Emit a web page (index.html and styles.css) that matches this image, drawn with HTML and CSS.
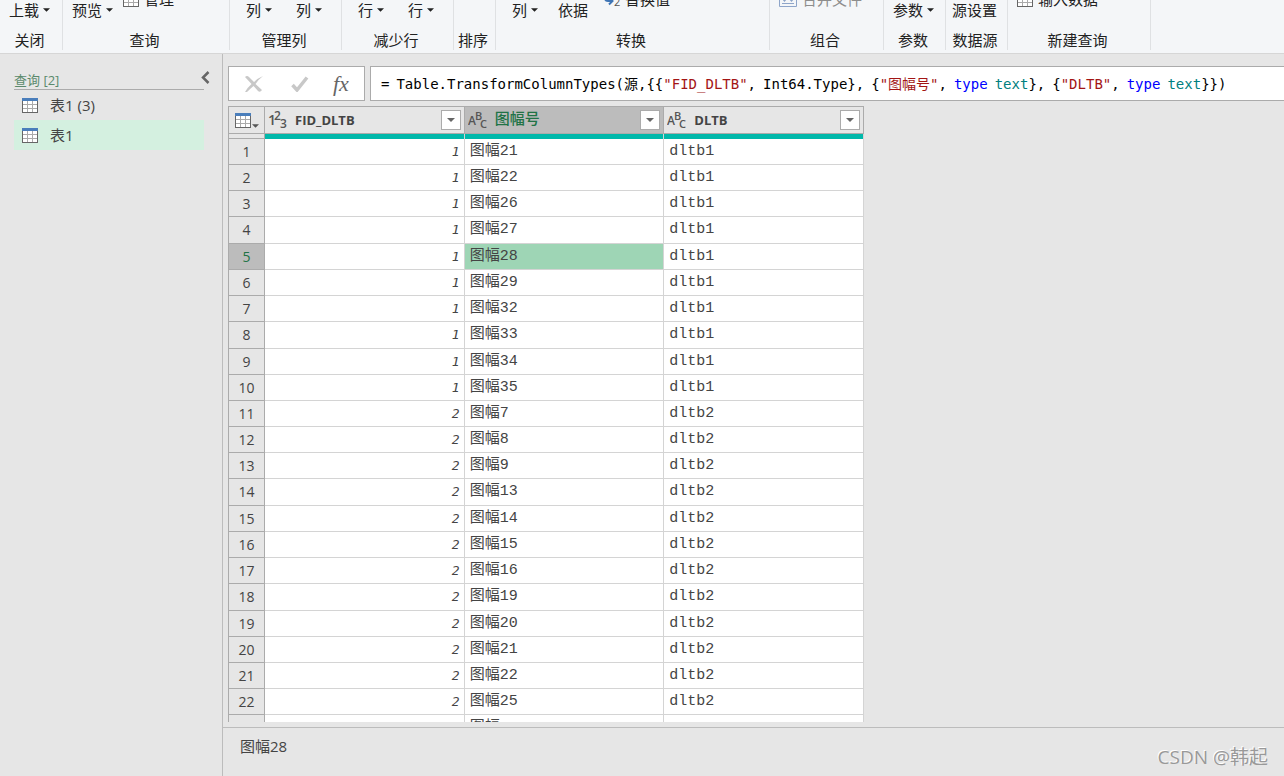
FILE: index.html
```html
<!DOCTYPE html>
<html lang="zh-CN">
<head>
<meta charset="utf-8">
<title>Power Query 编辑器</title>
<link rel="stylesheet" href="styles.css">
</head>
<body>
<svg class="defs" aria-hidden="true">
  <symbol id="i-grid" viewBox="0 0 16 15"><rect x=".5" y=".5" width="15" height="14" fill="#fff" stroke="#666"/><path d="M5.5 3v11M10.5 3v11M1 6.5h14M1 10.5h14" stroke="#aaa" fill="none"/><path d="M0 0h16v3H0z" fill="#4a7ebb"/></symbol>
  <symbol id="i-down" viewBox="0 0 8 4"><path d="M0 0h8L4 4z" fill="currentColor"/></symbol>
</svg>
<div class="app">
  <header class="ribbon">
    <section class="group g-close">
      <div class="commands"><button>上载<svg class="caret"><use href="#i-down"/></svg></button></div>
      <div class="label">关闭</div>
    </section>
    <section class="group g-query">
      <div class="commands"><button>预览<svg class="caret"><use href="#i-down"/></svg></button><button class="small"><svg class="grid-icon"><use href="#i-grid"/></svg>管理</button></div>
      <div class="label">查询</div>
    </section>
    <section class="group g-cols">
      <div class="commands spread"><button>列<svg class="caret"><use href="#i-down"/></svg></button><button>列<svg class="caret"><use href="#i-down"/></svg></button></div>
      <div class="label">管理列</div>
    </section>
    <section class="group g-cols">
      <div class="commands spread"><button>行<svg class="caret"><use href="#i-down"/></svg></button><button>行<svg class="caret"><use href="#i-down"/></svg></button></div>
      <div class="label">减少行</div>
    </section>
    <section class="group g-sort">
      <div class="commands"></div>
      <div class="label">排序</div>
    </section>
    <section class="group g-transform">
      <div class="commands"><button>列<svg class="caret"><use href="#i-down"/></svg></button><button>依据</button><button class="small"><svg class="replace-icon" viewBox="0 0 18 16"><path d="M1 5v2q0 3 3 3h4M5 6.500l3.500 3.500L5 13.500" fill="none" stroke="#3f75b5" stroke-width="2"/><text x="10" y="15" font-size="11" fill="#555">2</text></svg>替换值</button></div>
      <div class="label">转换</div>
    </section>
    <section class="group g-combine">
      <div class="commands"><button class="small" disabled><svg class="combine-icon" viewBox="0 0 18 16"><path d="M.5 0v15.500h17V0M3 12.500h12" fill="none" stroke="#8ea5c9"/><path d="M3 8h5l-2.500 3zM10 8h5l-2.500 3z" fill="#8ea5c9"/></svg>合并文件</button></div>
      <div class="label">组合</div>
    </section>
    <section class="group g-param">
      <div class="commands"><button>参数<svg class="caret"><use href="#i-down"/></svg></button></div>
      <div class="label">参数</div>
    </section>
    <section class="group g-source">
      <div class="commands"><button>源设置</button></div>
      <div class="label">数据源</div>
    </section>
    <section class="group g-new">
      <div class="commands"><button class="small"><svg class="grid-icon"><use href="#i-grid"/></svg>输入数据</button></div>
      <div class="label">新建查询</div>
    </section>
  </header>
  <div class="workspace">
    <nav class="sidebar">
      <div class="side-head"><span>查询 [2]</span><button aria-label="折叠"><svg class="chevron" viewBox="0 0 9 13"><path d="M7.500 1L2 6.500 7.500 12" fill="none" stroke="#666" stroke-width="2.500"/></svg></button></div>
      <a class="query" href="#t3"><svg class="grid-icon"><use href="#i-grid"/></svg>表1 (3)</a>
      <a class="query selected" href="#t1"><svg class="grid-icon"><use href="#i-grid"/></svg>表1</a>
    </nav>
    <main class="main">
      <div class="formula-bar">
        <div class="formula-actions">
          <button aria-label="取消"><svg width="20" height="18" viewBox="0 0 20 18"><path d="M1 2q2-2 4 0l5 5q4-4 9-6-4 3-7.500 8l6.500 6q-2 3-4 1l-4.500-5Q6 14 3 17H1q2-4 6.500-8z" fill="#c8c8c8"/></svg></button>
          <button aria-label="确认"><svg width="18" height="16" viewBox="0 0 18 16"><path d="M1.500 9l4.500 5L16 1.500" fill="none" stroke="#c8c8c8" stroke-width="3.500"/></svg></button>
          <button class="fx">fx</button>
        </div>
        <div class="formula" role="textbox" aria-label="公式"><span>=</span> <span>Table.TransformColumnTypes(源,{{<span class="str">"FID_DLTB"</span>,</span> <span>Int64.Type},</span> <span>{<span class="str">"图幅号"</span>,</span> <span class="kw">type</span> <span><span class="ty">text</span>},</span> <span>{<span class="str">"DLTB"</span>,</span> <span class="kw">type</span> <span><span class="ty">text</span>}})</span></div>
      </div>
      <div class="grid-view">
        <table class="data">
          <thead>
            <tr class="names">
              <th class="corner"><div class="corner-box"><svg class="grid-icon"><use href="#i-grid"/></svg><svg class="caret"><use href="#i-down"/></svg></div></th>
              <th><div class="head"><svg class="type" viewBox="0 0 20 20"><text x="0" y="15" font-size="14">1</text><text x="6" y="10" font-size="12">2</text><text x="12" y="18" font-size="12">3</text></svg><span>FID_DLTB</span><button class="filter" aria-label="筛选"><svg class="caret"><use href="#i-down"/></svg></button></div></th>
              <th class="active"><div class="head"><svg class="type" viewBox="0 0 20 20"><text x="0" y="15" font-size="12">A</text><text x="7" y="10" font-size="11">B</text><text x="12" y="18" font-size="11">C</text></svg><span class="cjk-name">图幅号</span><button class="filter" aria-label="筛选"><svg class="caret"><use href="#i-down"/></svg></button></div></th>
              <th><div class="head"><svg class="type" viewBox="0 0 20 20"><text x="0" y="15" font-size="12">A</text><text x="7" y="10" font-size="11">B</text><text x="12" y="18" font-size="11">C</text></svg><span>DLTB</span><button class="filter" aria-label="筛选"><svg class="caret"><use href="#i-down"/></svg></button></div></th>
            </tr>
            <tr class="quality"><td></td><td></td><td></td><td></td></tr>
          </thead>
          <tbody>
            <tr><th>1</th><td>1</td><td>图幅21</td><td>dltb1</td></tr>
            <tr><th>2</th><td>1</td><td>图幅22</td><td>dltb1</td></tr>
            <tr><th>3</th><td>1</td><td>图幅26</td><td>dltb1</td></tr>
            <tr><th>4</th><td>1</td><td>图幅27</td><td>dltb1</td></tr>
            <tr class="current"><th>5</th><td>1</td><td>图幅28</td><td>dltb1</td></tr>
            <tr><th>6</th><td>1</td><td>图幅29</td><td>dltb1</td></tr>
            <tr><th>7</th><td>1</td><td>图幅32</td><td>dltb1</td></tr>
            <tr><th>8</th><td>1</td><td>图幅33</td><td>dltb1</td></tr>
            <tr><th>9</th><td>1</td><td>图幅34</td><td>dltb1</td></tr>
            <tr><th>10</th><td>1</td><td>图幅35</td><td>dltb1</td></tr>
            <tr><th>11</th><td>2</td><td>图幅7</td><td>dltb2</td></tr>
            <tr><th>12</th><td>2</td><td>图幅8</td><td>dltb2</td></tr>
            <tr><th>13</th><td>2</td><td>图幅9</td><td>dltb2</td></tr>
            <tr><th>14</th><td>2</td><td>图幅13</td><td>dltb2</td></tr>
            <tr><th>15</th><td>2</td><td>图幅14</td><td>dltb2</td></tr>
            <tr><th>16</th><td>2</td><td>图幅15</td><td>dltb2</td></tr>
            <tr><th>17</th><td>2</td><td>图幅16</td><td>dltb2</td></tr>
            <tr><th>18</th><td>2</td><td>图幅19</td><td>dltb2</td></tr>
            <tr><th>19</th><td>2</td><td>图幅20</td><td>dltb2</td></tr>
            <tr><th>20</th><td>2</td><td>图幅21</td><td>dltb2</td></tr>
            <tr><th>21</th><td>2</td><td>图幅22</td><td>dltb2</td></tr>
            <tr><th>22</th><td>2</td><td>图幅25</td><td>dltb2</td></tr>
            <tr><th></th><td></td><td>图幅</td><td></td></tr>
          </tbody>
        </table>
      </div>
      <footer class="preview">图幅28</footer>
    </main>
  </div>
  <div class="watermark">CSDN @韩起</div>
</div>
</body>
</html>
```

FILE: styles.css
```css
* { box-sizing: border-box; }
body {
  margin: 0;
  background: #e6e6e6;
  color: #444;
  font: 15px/20px "Open Sans", "Noto Sans CJK SC", sans-serif;
}
button { border: 0; padding: 0; background: none; font: inherit; color: inherit; }
a { color: inherit; text-decoration: none; }
svg { display: block; flex: none; }
.defs { position: absolute; width: 0; height: 0; }
.app { position: relative; display: flex; flex-direction: column; height: 100vh; overflow: hidden; }
.caret { width: 7px; height: 4px; }
.grid-icon { width: 16px; height: 15px; }

/* Ribbon */
.ribbon {
  display: flex;
  flex: none;
  height: 54px;
  padding-bottom: 3px;
  overflow: hidden;
  background: #f4f6f8;
  border-bottom: 1px solid #d6d6d6;
  color: #222;
}
.group { flex: none; border-right: 1px solid #dfe1e3; }
.commands { display: flex; gap: 10px; height: 30px; padding-left: 9px; }
.commands button { display: flex; align-items: center; gap: 4px; height: 20px; white-space: nowrap; }
.commands .small { gap: 5px; margin-top: -11px; }
.commands button:disabled { color: #8d8d8d; }
.label { padding-right: 3px; text-align: center; white-space: nowrap; }
.commands.spread { gap: 24px; padding-left: 16px; }
.g-close { width: 63px; }
.g-query { width: 167px; }
.g-cols { width: 112px; }
.g-sort { width: 42px; }
.g-transform { width: 274px; }
.g-transform .commands { gap: 20px; padding-left: 16px; }
.g-transform .small { margin-left: -4px; gap: 3px; }
.g-combine { width: 114px; }
.g-param, .g-source { width: 62px; }
.g-source .commands { padding-left: 6px; }
.g-new { width: 143px; }
.replace-icon, .combine-icon { width: 18px; height: 16px; }

/* Query list */
.workspace { display: flex; flex: 1; min-height: 0; }
.sidebar { flex: none; width: 223px; padding: 15px 18px 0 14px; border-right: 1px solid #bcbcbc; }
.side-head {
  display: flex;
  justify-content: space-between;
  height: 21px;
  border-bottom: 1px solid #ababab;
  color: #5a8a6c;
  font-size: 13px;
}
.side-head span { line-height: 22px; }
.side-head button { margin-right: -6px; height: 17px; }
.chevron { width: 9px; height: 13px; }
.query { display: flex; align-items: center; gap: 12px; height: 30px; padding-left: 8px; }
.selected { background: #d4f0e0; }

/* Formula bar */
.main { display: flex; flex: 1; flex-direction: column; min-width: 0; }
.formula-bar { display: flex; flex: none; gap: 5px; height: 35px; margin: 12px 0 5px 5px; }
.formula-actions {
  display: flex;
  align-items: center;
  gap: 27px;
  width: 137px;
  padding-left: 15px;
  background: #fff;
  border: 1px solid #ababab;
}
.fx { margin-left: -3px; color: #666; font: italic 22px/24px "Liberation Serif", serif; }
.formula {
  display: flex;
  flex: 1;
  gap: 7px;
  min-width: 0;
  padding-left: 10px;
  overflow: hidden;
  background: #fff;
  border: 1px solid #ababab;
  border-right: 0;
  color: #000;
  font: 14px/34px "DejaVu Sans Mono", "Noto Sans CJK SC", monospace;
  white-space: nowrap;
}
.str { color: #a31515; }
.kw { color: #00f; }
.ty { color: #008080; }

/* Data grid */
.grid-view { flex: 1; min-height: 0; margin: 0 0 5px 5px; overflow: hidden; }
.data { width: 636px; border-collapse: separate; border-spacing: 0; table-layout: fixed; }
.data th, .data td { padding: 0; }
.names th {
  height: 28px;
  border: solid #ababab;
  border-width: 1px 1px 1px 0;
  background: #e6e6e6;
  text-align: left;
  font-size: 13px;
}
.data .corner { width: 37px; border-left: 1px solid #ababab; }
.data .active { background: #bcbcbc; color: #217346; }
.corner-box { display: flex; align-items: flex-end; gap: 1px; padding-left: 6px; color: #555; }
.head { display: flex; align-items: center; padding: 0 3px 0 3px; }
.type { width: 20px; height: 20px; font-weight: 600; fill: #555; }
.head span { flex: 1; margin-left: 7px; }
.head .cjk-name { font-size: 15px; font-weight: 500; line-height: 20px; padding-bottom: 4px; }
.filter {
  display: flex;
  align-items: center;
  justify-content: center;
  width: 20px;
  height: 20px;
  border: 1px solid #ababab;
  background: #fff;
  color: #666;
}
.filter .caret { width: 8px; }
.quality td { height: 5px; background: #00b8aa; border-right: 1px solid #d4d4d4; }
.quality td:first-child { background: #e6e6e6; border: solid #ababab; border-width: 0 1px 1px; }
tbody th {
  height: 26px;
  border: solid #ababab;
  border-width: 0 1px 1px;
  background: #e6e6e6;
  font-size: 14px;
  font-weight: 400;
  line-height: 20px;
}
tbody td {
  border: solid #d4d4d4;
  border-width: 0 1px 1px 0;
  background: #fff;
  font: 15px/20px "Liberation Mono", "Noto Sans CJK SC", monospace;
}
tbody tr:nth-child(10n + 4) th, tbody tr:nth-child(10n + 8) th { height: 27px; }
.data tbody td { padding-left: 5px; }
.data tbody td:nth-child(2) {
  padding-right: 4px;
  text-align: right;
  font: italic 13px/20px "DejaVu Sans Mono", monospace;
}
.current th { background: #bcbcbc; color: #217346; }
.current td:nth-child(3) { background: #9ed5b5; }

.preview { flex: none; height: 49px; padding: 8px 17px; border-top: 1px solid #bcbcbc; font-size: 15px; }
.watermark {
  position: absolute;
  right: 16px;
  bottom: 7px;
  color: #999;
  font-size: 19px;
  line-height: 24px;
  text-shadow: -1px -1px 0 #fff;
}
```
